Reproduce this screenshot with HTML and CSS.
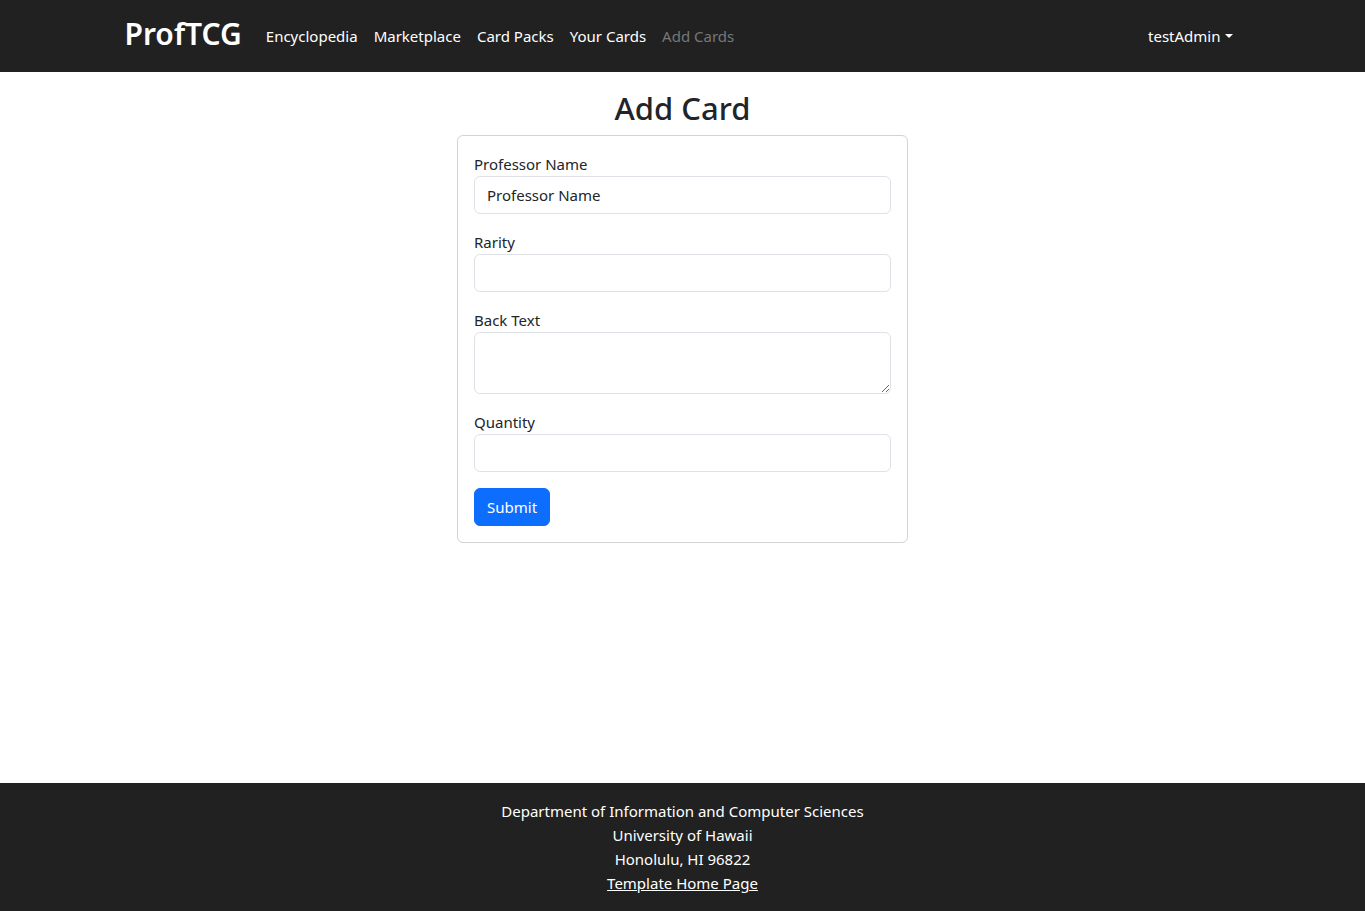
FILE: index.html
```html
<!DOCTYPE html>
<html lang="en">
<head>
<meta charset="utf-8">
<meta name="viewport" content="width=device-width, initial-scale=1">
<title>ProfTCG</title>
<link rel="stylesheet" href="styles.css">
</head>
<body>
<header class="navbar">
  <div class="container navbar-inner">
    <a class="brand" href="#">ProfTCG</a>
    <nav class="nav">
      <a class="nav-link" href="#">Encyclopedia</a>
      <a class="nav-link" href="#">Marketplace</a>
      <a class="nav-link" href="#">Card Packs</a>
      <a class="nav-link" href="#">Your Cards</a>
      <a class="nav-link active" href="#" aria-current="page">Add Cards</a>
    </nav>
    <button class="user-menu" type="button" aria-haspopup="true">testAdmin<span class="caret"></span></button>
  </div>
</header>
<main class="container main">
  <h2 class="title">Add Card</h2>
  <form class="card">
    <div class="field">
      <label class="label" for="name">Professor Name</label>
      <input class="control" id="name" type="text" value="Professor Name">
    </div>
    <div class="field">
      <label class="label" for="rarity">Rarity</label>
      <input class="control" id="rarity" type="text">
    </div>
    <div class="field">
      <label class="label" for="back">Back Text</label>
      <textarea class="control area" id="back" rows="2"></textarea>
    </div>
    <div class="field">
      <label class="label" for="quantity">Quantity</label>
      <input class="control" id="quantity" type="text">
    </div>
    <button class="submit" type="submit">Submit</button>
  </form>
</main>
<footer class="footer">
  <div>Department of Information and Computer Sciences</div>
  <div>University of Hawaii</div>
  <div>Honolulu, HI 96822</div>
  <a class="footer-link" href="#">Template Home Page</a>
</footer>
</body>
</html>
```
FILE: styles.css
```css
*, *::before, *::after { box-sizing: border-box; }

body {
  margin: 0;
  min-height: 100vh;
  display: flex;
  flex-direction: column;
  background: #fff;
  color: #212529;
  font: 15px/24px "Noto Sans", "Open Sans", sans-serif;
}

.container {
  width: 100%;
  max-width: 1140px;
  margin: 0 auto;
  padding: 0 12px;
}

.navbar { background: #212121; }

.navbar-inner {
  display: flex;
  align-items: center;
  min-height: 72px;
}

.brand {
  margin-right: 16px;
  padding-bottom: 4px;
  color: #fff;
  font-size: 30px;
  font-weight: 600;
  line-height: 40px;
  text-decoration: none;
}

.nav {
  display: flex;
  flex: 1;
}

.nav-link {
  padding: 8px;
  color: #fff;
  text-decoration: none;
}

.nav-link.active { color: #75787b; }

.user-menu {
  display: flex;
  align-items: center;
  gap: 4px;
  padding: 8px;
  border: 0;
  background: none;
  color: #fff;
  font: inherit;
}

.caret {
  border-top: 4px solid #fff;
  border-right: 4px solid transparent;
  border-left: 4px solid transparent;
}

.main {
  flex: 1;
  display: flex;
  flex-direction: column;
  align-items: center;
  padding-top: 16px;
}

.title {
  margin: 0 0 7px;
  font-size: 31px;
  font-weight: 500;
  line-height: 40px;
}

.card {
  width: 100%;
  max-width: 451px;
  padding: 16px;
  border: 1px solid #d2d3d4;
  border-radius: 6px;
}

.field {
  display: flex;
  flex-direction: column;
  margin-bottom: 16px;
}

.control {
  width: 100%;
  height: 38px;
  padding: 6px 12px;
  border: 1px solid #dee2e6;
  border-radius: 6px;
  background: #fff;
  color: #212529;
  font: inherit;
}

.area {
  height: 62px;
  resize: vertical;
}

.submit {
  display: block;
  padding: 6px 12px;
  border: 1px solid #0d6efd;
  border-radius: 6px;
  background: #0d6efd;
  color: #fff;
  font: inherit;
}

.footer {
  padding: 16px 12px;
  background: #212121;
  color: #fff;
  text-align: center;
}

.footer-link { color: #fff; }
```
